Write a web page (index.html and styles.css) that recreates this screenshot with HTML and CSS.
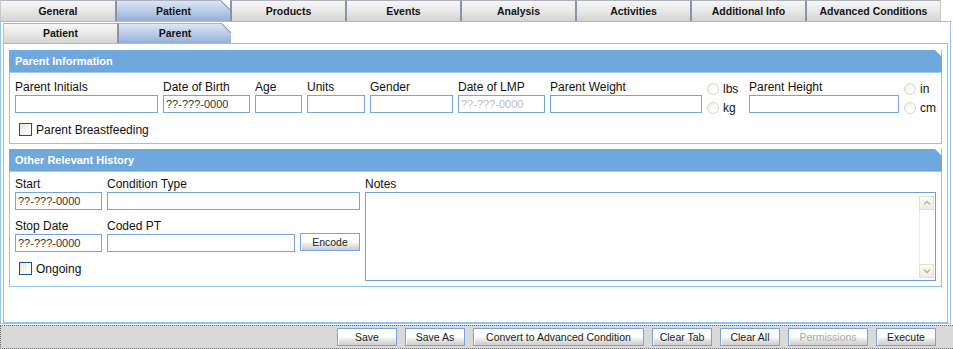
FILE: index.html
```html
<!DOCTYPE html>
<html>
<head>
<meta charset="utf-8">
<title>Patient - Parent</title>
<link rel="stylesheet" href="styles.css">
</head>
<body>
<div class="tabs">
  <div class="tab first">General</div>
  <div class="tab active">Patient</div>
  <div class="tab">Products</div>
  <div class="tab">Events</div>
  <div class="tab">Analysis</div>
  <div class="tab">Activities</div>
  <div class="tab">Additional Info</div>
  <div class="tab wide">Advanced Conditions</div>
</div>
<div class="outer">
  <div class="subtabs">
    <div class="subtab first">Patient</div>
    <div class="subtab active">Parent</div>
  </div>
  <div class="inner">
    <div class="sec sec-info">
      <div class="sec-head">Parent Information</div>
      <div class="sec-body body-info">
        <div class="row row1">
          <div class="field w143"><label>Parent Initials</label><input class="inp" type="text"></div>
          <div class="field w87"><label>Date of Birth</label><input class="inp date" type="text" value="??-???-0000"></div>
          <div class="field w47"><label>Age</label><input class="inp" type="text"></div>
          <div class="field w58"><label>Units</label><input class="inp" type="text"></div>
          <div class="field w83"><label>Gender</label><input class="inp" type="text"></div>
          <div class="field w87"><label>Date of LMP</label><input class="inp date disabled" type="text" value="??-???-0000" disabled></div>
          <div class="field w152"><label>Parent Weight</label><input class="inp" type="text"></div>
          <div class="radios">
            <div class="ropt"><span class="radio"></span><span>lbs</span></div>
            <div class="ropt"><span class="radio"></span><span>kg</span></div>
          </div>
          <div class="field w150"><label>Parent Height</label><input class="inp" type="text"></div>
          <div class="radios">
            <div class="ropt"><span class="radio"></span><span>in</span></div>
            <div class="ropt"><span class="radio"></span><span>cm</span></div>
          </div>
        </div>
        <div class="chk chk-info"><span class="box"></span><span>Parent Breastfeeding</span></div>
      </div>
    </div>
    <div class="sec sec-hist">
      <div class="sec-head">Other Relevant History</div>
      <div class="sec-body body-hist">
        <div class="hist-left">
          <div class="row">
            <div class="field w87"><label>Start</label><input class="inp date" type="text" value="??-???-0000"></div>
            <div class="field w253"><label>Condition Type</label><input class="inp" type="text"></div>
          </div>
          <div class="row row2">
            <div class="field w87"><label>Stop Date</label><input class="inp date" type="text" value="??-???-0000"></div>
            <div class="field w188"><label>Coded PT</label><input class="inp" type="text"></div>
            <button class="btn encode" type="button">Encode</button>
          </div>
          <div class="chk chk-hist"><span class="box"></span><span>Ongoing</span></div>
        </div>
        <div class="field notes-field">
          <label>Notes</label>
          <div class="notes-box">
            <textarea class="notes"></textarea>
            <div class="sb">
              <span class="sb-btn"><svg width="12" height="12" viewBox="0 0 12 12"><path d="M3 7.5 L6 4.5 L9 7.5" fill="none" stroke="#b9b49a" stroke-width="1.4"/></svg></span>
              <span class="sb-track"></span>
              <span class="sb-btn"><svg width="12" height="12" viewBox="0 0 12 12"><path d="M3 4.5 L6 7.5 L9 4.5" fill="none" stroke="#b9b49a" stroke-width="1.4"/></svg></span>
            </div>
          </div>
        </div>
      </div>
    </div>
  </div>
</div>
<div class="bar">
  <button class="btn w60" type="button">Save</button>
  <button class="btn w60" type="button">Save As</button>
  <button class="btn w171" type="button">Convert to Advanced Condition</button>
  <button class="btn w60" type="button">Clear Tab</button>
  <button class="btn w60" type="button">Clear All</button>
  <button class="btn w80 dis" type="button">Permissions</button>
  <button class="btn w60" type="button">Execute</button>
</div>
</body>
</html>
```
FILE: styles.css
```css
* { box-sizing: border-box; }
body {
  margin: 0;
  width: 953px;
  height: 349px;
  overflow: hidden;
  background: #fff;
  color: #111;
  font-family: "Liberation Sans", Arial, sans-serif;
}

/* main tabs */
.tabs { display: flex; height: 21px; }
.tab {
  position: relative;
  width: 115px;
  height: 21px;
  border-left: 2px solid #8a93ad;
  border-top: 1px solid #aeb2bd;
  background: linear-gradient(#f7f7f7, #e6e6e6 55%, #d3d3d3);
  font-size: 10.5px;
  font-weight: bold;
  line-height: 20px;
  text-align: center;
  color: #141414;
  white-space: nowrap;
}
.tab.first { border-left: 1px solid #c9c9c9; }
.tab.wide { width: 136px; border-right: 1px solid #c9c9c9; }
.tab.active,
.subtab.active {
  background: linear-gradient(#dbe6f6, #b9cbe9 50%, #97aed8);
  clip-path: polygon(0 0, calc(100% - 9px) 0, 100% 9px, 100% 100%, 0 100%);
}
.tab.active::after,
.subtab.active::after {
  content: "";
  position: absolute;
  top: 0;
  right: 0;
  width: 9px;
  height: 9px;
  background: linear-gradient(to top right, transparent calc(50% - 0.8px), #7f88a5 50%, transparent calc(50% + 0.8px));
}

/* outer panel */
.outer {
  width: 951px;
  border: 1px solid #8ec3ee;
  padding: 1px 2px 0;
}
.subtabs { display: flex; height: 20px; }
.subtab {
  position: relative;
  width: 114px;
  height: 20px;
  border-left: 2px solid #8a93ad;
  border-top: 1px solid #aeb2bd;
  background: linear-gradient(#f7f7f7, #e6e6e6 55%, #d3d3d3);
  font-size: 10.5px;
  font-weight: bold;
  line-height: 19px;
  text-align: center;
  color: #141414;
}
.subtab.first { border-left: 1px solid #9fc8ec; }

.inner {
  height: 280px;
  border: 1px solid #8ec3ee;
  padding: 6px 5px 0;
}

/* sections */
.sec {
  border: 1px solid #8ec3ee;
  border-top: none;
}
.sec + .sec { margin-top: 5px; }
.sec-head {
  height: 23px;
  margin: 0 -1px;
  padding-left: 6px;
  background: #6fa8dc;
  border-bottom: 1px solid #9ccbf1;
  color: #fff;
  font-size: 11px;
  font-weight: bold;
  line-height: 22px;
  clip-path: polygon(0 0, calc(100% - 7px) 0, 100% 7px, 100% 100%, 0 100%);
}
.sec-body { padding-left: 5px; }
.body-info { height: 70px; padding-top: 7px; }
.body-hist { height: 114px; padding-top: 5px; padding-right: 4px; display: flex; gap: 5px; }

.row { display: flex; gap: 5px; align-items: flex-start; }
.row1 { height: 33px; }
.row2 { margin-top: 9px; }
.field label {
  display: block;
  height: 14px;
  margin-bottom: 1px;
  font-size: 12px;
  line-height: 14px;
  white-space: nowrap;
  color: #111;
}
.inp {
  display: block;
  width: 100%;
  height: 18px;
  margin: 0;
  padding: 0 2px;
  border: 1px solid #76a4da;
  background: #fff;
  font-family: "Liberation Sans", Arial, sans-serif;
  font-size: 11px;
  color: #333;
  outline: none;
}
.inp.disabled { color: #bdbdbd; background: #fff; }

.w47 { width: 47px; }
.w58 { width: 58px; }
.w60 { width: 60px; }
.w80 { width: 80px; }
.w83 { width: 83px; }
.w87 { width: 87px; }
.w143 { width: 143px; }
.w150 { width: 150px; }
.w152 { width: 152px; }
.w171 { width: 171px; }
.w188 { width: 188px; }
.w253 { width: 253px; }

/* radios */
.radios { width: 37px; height: 33px; padding-top: 3px; }
.ropt {
  display: flex;
  align-items: flex-start;
  gap: 4px;
  height: 19px;
  font-size: 12px;
  line-height: 13px;
}
.radio {
  display: block;
  flex: none;
  width: 12px;
  height: 12px;
  border-radius: 50%;
  border: 1px solid #dbd7c6;
  background: linear-gradient(135deg, #efeee6, #fff 70%);
}

/* checkboxes */
.chk {
  display: flex;
  align-items: center;
  gap: 4px;
  margin-left: 4px;
  height: 13px;
  font-size: 12px;
}
.chk-info { margin-top: 10px; }
.chk-hist { margin-top: 10px; }
.box {
  display: block;
  width: 13px;
  height: 13px;
  border: 1px solid #1f5180;
  background: linear-gradient(135deg, #e7e6df, #fafaf8 70%);
}

/* notes */
.notes-field { width: 571px; }
.notes-box {
  position: relative;
  height: 89px;
  border: 1px solid #6f9fd8;
}
.notes {
  display: block;
  width: 100%;
  height: 100%;
  border: none;
  resize: none;
  overflow: hidden;
  outline: none;
  font-family: "Liberation Sans", Arial, sans-serif;
  font-size: 11px;
}
.sb {
  position: absolute;
  top: 3px;
  right: 1px;
  bottom: 2px;
  width: 15px;
  display: flex;
  flex-direction: column;
}
.sb-btn {
  display: flex;
  align-items: center;
  justify-content: center;
  width: 15px;
  height: 14px;
  border: 1px solid #e2dfcf;
  background: linear-gradient(#fbfbf7, #efeee5);
}
.sb-track {
  flex: 1;
  border-left: 1px dotted #e2dfcf;
}

/* buttons */
.btn {
  height: 18px;
  margin: 0;
  padding: 0;
  border: 1px solid #77a3dd;
  background: linear-gradient(#fff 0, #fff 50%, #ececec 62%, #cdcdcd 100%);
  box-shadow: inset 1px 1px 0 #fff;
  font-family: "Liberation Sans", Arial, sans-serif;
  font-size: 10.5px;
  line-height: 16px;
  color: #222;
  text-align: center;
  white-space: nowrap;
}
.btn.dis { color: #a9a9a9; }
.encode { width: 60px; align-self: flex-end; margin-bottom: 1px; }

/* bottom bar */
.bar {
  margin-top: 1px;
  height: 24px;
  border-top: 1px dotted #6a6a6a;
  border-bottom: 1px dotted #6a6a6a;
  border-left: 1px dotted #6a6a6a;
  background: #d9d9d9;
  display: flex;
  justify-content: flex-end;
  gap: 8px;
  padding: 2px 17px 0 0;
}
```
